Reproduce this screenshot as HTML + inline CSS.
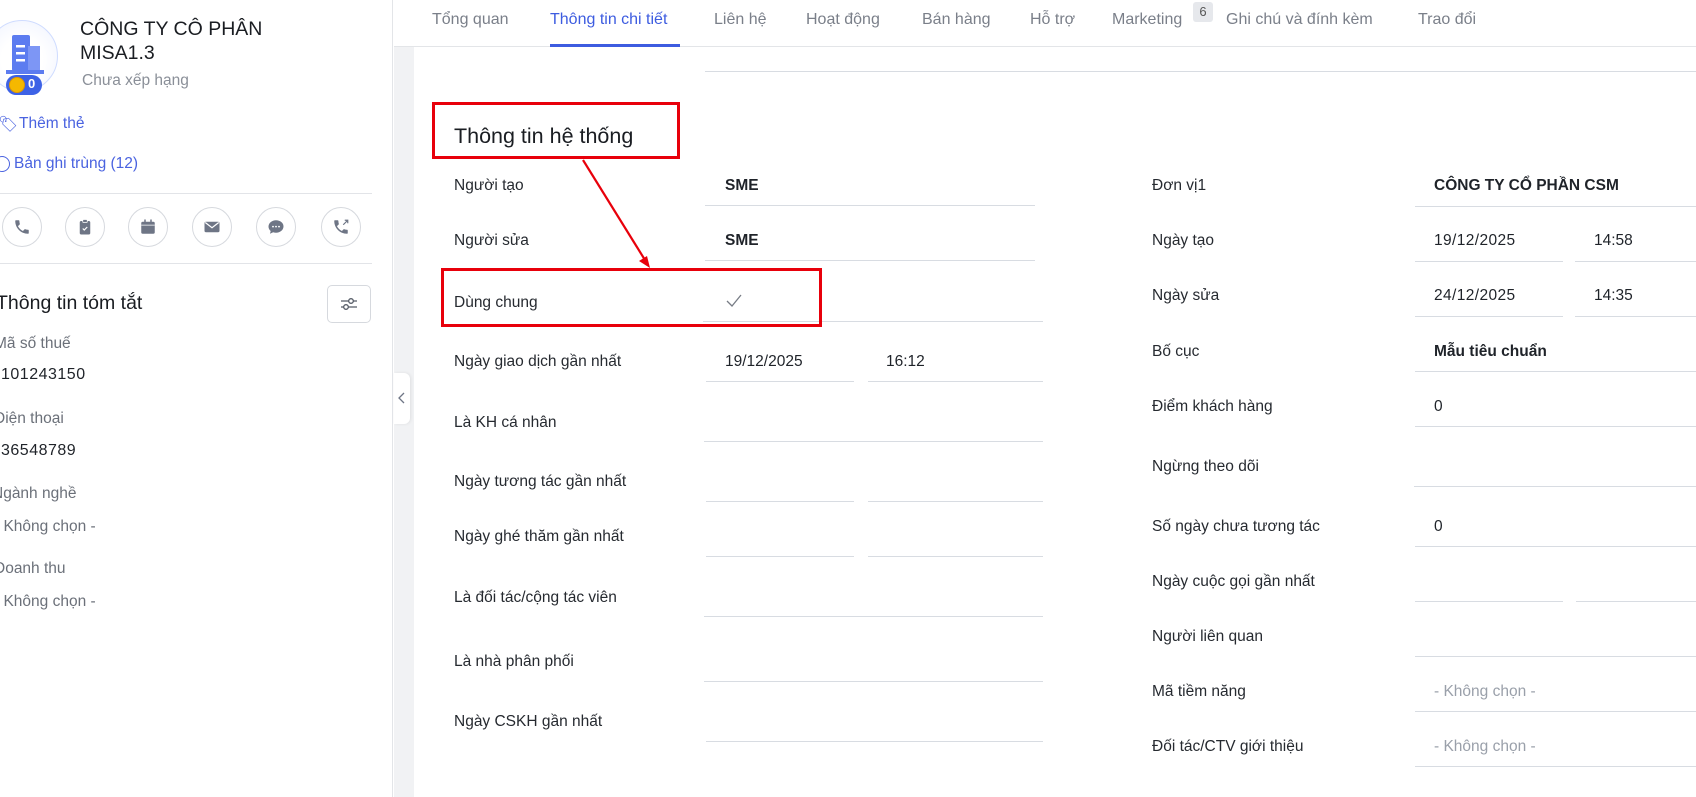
<!DOCTYPE html>
<html><head><meta charset="utf-8"><style>
*{margin:0;padding:0;box-sizing:border-box}
body{width:1696px;height:797px;overflow:hidden;background:#fff;font-family:"Liberation Sans",sans-serif;position:relative;color:#1f2329}
.a{position:absolute;white-space:nowrap}
.lbl{font-size:15.5px;color:#262a30}
.val{font-size:15.5px;font-weight:bold;color:#1f2329}
.ln{position:absolute;height:1px;background:#d8dce2}
.tab{position:absolute;top:11px;font-size:16px;color:#7a7f89}
.gray{color:#9aa0aa}
.ic{position:absolute;width:40px;height:40px;border:1px solid #d6d9de;border-radius:50%;display:flex;align-items:center;justify-content:center}
.side{font-size:15.5px;color:#6b7079}
.sv{font-size:16px;color:#1f2329;letter-spacing:.5px}
</style></head><body>
<!-- left panel -->
<div class="a" style="left:0;top:0;width:393px;height:797px;border-right:1px solid #e3e5e8;background:#fff"></div>
<div class="a" style="left:-14px;top:20px;width:72px;height:72px;border-radius:50%;border:1px solid #cfdcff;background:radial-gradient(circle at 50% 55%,#ffffff 40%,#eef2ff 100%)"></div>
<svg class="a" style="left:4px;top:32px" width="42" height="44" viewBox="0 0 42 44"><rect x="8" y="3" width="18" height="36" rx="2" fill="#5c7cf0"/><rect x="24" y="14" width="12" height="25" fill="#7d96f5"/><rect x="2" y="38" width="38" height="4" fill="#5c7cf0"/><rect x="12" y="13" width="9" height="2.5" fill="#fff"/><rect x="12" y="20" width="9" height="2.5" fill="#fff"/><rect x="12" y="27" width="9" height="2.5" fill="#fff"/></svg>
<div class="a" style="left:6px;top:75px;width:36px;height:20px;border-radius:10px;background:#3d62e6"></div>
<div class="a" style="left:9px;top:77px;width:16px;height:16px;border-radius:50%;background:#f5b800;border:1px solid #e09a00"></div>
<div class="a" style="left:28px;top:76px;font-size:13px;font-weight:bold;color:#fff">0</div>
<div class="a" style="left:80px;top:17px;font-size:19.5px;color:#1a1d22;line-height:24px">CÔNG TY CÔ PHÂN<br>MISA1.3</div>
<div class="a" style="left:82px;top:72px;font-size:15.5px;color:#8a8f98">Chưa xếp hạng</div>
<div class="a" style="left:-2px;top:115px;font-size:15.5px;color:#4a63e0">🏷︎</div>
<div class="a" style="left:19px;top:115px;font-size:15.5px;color:#4a63e0">Thêm thẻ</div>
<div class="a" style="left:-6px;top:156px;width:16px;height:16px;border:1.5px solid #4a63e0;border-radius:50%"></div>
<div class="a" style="left:14px;top:155px;font-size:15.5px;color:#4a63e0">Bản ghi trùng (12)</div>
<div class="ln" style="left:0;top:193px;width:372px;background:#e2e4e8"></div>
<div class="ic" style="left:2px;top:207px"><svg width="18" height="18" viewBox="0 0 24 24"><path d="M6.6 10.8c1.4 2.8 3.8 5.1 6.6 6.6l2.2-2.2c.3-.3.7-.4 1-.2 1.1.4 2.3.6 3.6.6.6 0 1 .4 1 1V20c0 .6-.4 1-1 1C10.6 21 3 13.4 3 4c0-.6.4-1 1-1h3.5c.6 0 1 .4 1 1 0 1.3.2 2.5.6 3.6.1.3 0 .7-.2 1z" fill="#6e7585"/></svg></div>
<div class="ic" style="left:65px;top:207px"><svg width="18" height="18" viewBox="0 0 24 24"><rect x="5" y="4" width="14" height="18" rx="2" fill="#6e7585"/><rect x="9" y="2" width="6" height="4" rx="1" fill="#6e7585" stroke="#fff"/><path d="M9 14l2 2 4-4" stroke="#fff" stroke-width="1.6" fill="none"/></svg></div>
<div class="ic" style="left:128px;top:207px"><svg width="18" height="18" viewBox="0 0 24 24"><rect x="3" y="5" width="18" height="16" rx="2" fill="#6e7585"/><rect x="7" y="2" width="2" height="5" fill="#6e7585"/><rect x="15" y="2" width="2" height="5" fill="#6e7585"/><rect x="3" y="9" width="18" height="1" fill="#fff"/></svg></div>
<div class="ic" style="left:192px;top:207px"><svg width="20" height="18" viewBox="0 0 24 24"><rect x="2" y="5" width="20" height="14" rx="2" fill="#6e7585"/><path d="M3 6l9 7 9-7" stroke="#fff" stroke-width="1.6" fill="none"/></svg></div>
<div class="ic" style="left:256px;top:207px"><svg width="18" height="18" viewBox="0 0 24 24"><path d="M12 3C6.5 3 2 6.8 2 11.5c0 2.3 1.1 4.4 2.9 5.9L4 21l4.2-2c1.2.4 2.5.6 3.8.6 5.5 0 10-3.8 10-8.5S17.5 3 12 3z" fill="#6e7585"/><circle cx="8" cy="11.5" r="1.2" fill="#fff"/><circle cx="12" cy="11.5" r="1.2" fill="#fff"/><circle cx="16" cy="11.5" r="1.2" fill="#fff"/></svg></div>
<div class="ic" style="left:321px;top:207px"><svg width="18" height="18" viewBox="0 0 24 24"><path d="M6.6 10.8c1.4 2.8 3.8 5.1 6.6 6.6l2.2-2.2c.3-.3.7-.4 1-.2 1.1.4 2.3.6 3.6.6.6 0 1 .4 1 1V20c0 .6-.4 1-1 1C10.6 21 3 13.4 3 4c0-.6.4-1 1-1h3.5c.6 0 1 .4 1 1 0 1.3.2 2.5.6 3.6.1.3 0 .7-.2 1z" fill="#6e7585"/><path d="M15 9l6-6M17 3h4v4" stroke="#6e7585" stroke-width="1.6" fill="none"/></svg></div>
<div class="ln" style="left:0;top:263px;width:372px;background:#e2e4e8"></div>
<div class="a" style="left:-4px;top:292px;font-size:19.5px;color:#1a1d22">Thông tin tóm tắt</div>
<div class="a" style="left:327px;top:285px;width:44px;height:38px;border:1px solid #d6d9de;border-radius:5px"></div>
<svg class="a" style="left:339px;top:294px" width="20" height="20" viewBox="0 0 20 20"><path d="M2 7h16M2 13h16" stroke="#555b66" stroke-width="1.3"/><circle cx="12" cy="7" r="2.3" fill="#fff" stroke="#555b66" stroke-width="1.3"/><circle cx="7" cy="13" r="2.3" fill="#fff" stroke="#555b66" stroke-width="1.3"/></svg>
<div class="a side" style="left:-6px;top:335px">Mã số thuế</div>
<div class="a sv" style="left:1px;top:366px">101243150</div>
<div class="a side" style="left:-6px;top:410px">Điện thoại</div>
<div class="a sv" style="left:1px;top:442px">36548789</div>
<div class="a side" style="left:-8px;top:485px">Ngành nghề</div>
<div class="a side gray" style="left:-6px;top:518px">- Không chọn -</div>
<div class="a side" style="left:-6px;top:560px">Doanh thu</div>
<div class="a side gray" style="left:-6px;top:593px">- Không chọn -</div>
<!-- gray strip -->
<div class="a" style="left:394px;top:47px;width:20px;height:750px;background:#f1f2f4"></div>
<div class="a" style="left:394px;top:373px;width:16px;height:51px;background:#fff;border-radius:0 6px 6px 0;box-shadow:1px 0 3px rgba(0,0,0,.08)"></div>
<svg class="a" style="left:397px;top:391px" width="10" height="14" viewBox="0 0 10 14"><path d="M7 2L2 7l5 5" stroke="#6e7585" stroke-width="1.3" fill="none"/></svg>
<!-- tabs -->
<div class="ln" style="left:394px;top:46px;width:1302px;background:#e3e5e8"></div>
<div class="tab" style="left:432px">Tổng quan</div>
<div class="tab" style="left:550px;color:#3d5ce0">Thông tin chi tiết</div>
<div class="a" style="left:550px;top:44px;width:130px;height:3px;background:#3d5ce0"></div>
<div class="tab" style="left:714px">Liên hệ</div>
<div class="tab" style="left:806px">Hoạt động</div>
<div class="tab" style="left:922px">Bán hàng</div>
<div class="tab" style="left:1030px">Hỗ trợ</div>
<div class="tab" style="left:1112px">Marketing</div>
<div class="a" style="left:1193px;top:2px;width:20px;height:20px;background:#e6e8ec;border-radius:3px;font-size:13px;color:#555;text-align:center;line-height:20px">6</div>
<div class="tab" style="left:1226px">Ghi chú và đính kèm</div>
<div class="tab" style="left:1418px">Trao đổi</div>
<div class="ln" style="left:705px;top:71px;width:991px"></div>
<!-- heading -->
<div class="a" style="left:454px;top:124px;font-size:21.5px;color:#1a1d22">Thông tin hệ thống</div>
<!-- left column -->
<div class="a lbl" style="left:454px;top:177px">Người tạo</div><div class="a val" style="left:725px;top:177px">SME</div><div class="ln" style="left:705px;top:205px;width:330px"></div>
<div class="a lbl" style="left:454px;top:232px">Người sửa</div><div class="a val" style="left:725px;top:232px">SME</div><div class="ln" style="left:705px;top:260px;width:330px"></div>
<div class="a lbl" style="left:454px;top:294px">Dùng chung</div>
<svg class="a" style="left:725px;top:293px" width="18" height="16" viewBox="0 0 18 16"><path d="M2 8l5 5 9-11" stroke="#777c85" stroke-width="1.3" fill="none"/></svg>
<div class="ln" style="left:703px;top:321px;width:340px"></div>
<div class="a lbl" style="left:454px;top:353px">Ngày giao dịch gần nhất</div><div class="a val" style="left:725px;top:353px;font-weight:normal">19/12/2025</div><div class="a val" style="left:886px;top:353px;font-weight:normal">16:12</div>
<div class="ln" style="left:706px;top:381px;width:148px"></div><div class="ln" style="left:868px;top:381px;width:175px"></div>
<div class="a lbl" style="left:454px;top:414px">Là KH cá nhân</div><div class="ln" style="left:704px;top:441px;width:339px"></div>
<div class="a lbl" style="left:454px;top:473px">Ngày tương tác gần nhất</div><div class="ln" style="left:706px;top:501px;width:148px"></div><div class="ln" style="left:868px;top:501px;width:175px"></div>
<div class="a lbl" style="left:454px;top:528px">Ngày ghé thăm gần nhất</div><div class="ln" style="left:706px;top:556px;width:148px"></div><div class="ln" style="left:868px;top:556px;width:175px"></div>
<div class="a lbl" style="left:454px;top:589px">Là đối tác/cộng tác viên</div><div class="ln" style="left:704px;top:616px;width:339px"></div>
<div class="a lbl" style="left:454px;top:653px">Là nhà phân phối</div><div class="ln" style="left:704px;top:681px;width:339px"></div>
<div class="a lbl" style="left:454px;top:713px">Ngày CSKH gần nhất</div><div class="ln" style="left:706px;top:741px;width:337px"></div>
<!-- right column -->
<div class="a lbl" style="left:1152px;top:177px">Đơn vị1</div><div class="a val" style="left:1434px;top:177px">CÔNG TY CỔ PHẦN CSM</div><div class="ln" style="left:1415px;top:206px;width:281px"></div>
<div class="a lbl" style="left:1152px;top:232px">Ngày tạo</div><div class="a val" style="left:1434px;top:232px;font-weight:normal;letter-spacing:.4px">19/12/2025</div><div class="a val" style="left:1594px;top:232px;font-weight:normal">14:58</div><div class="ln" style="left:1415px;top:261px;width:148px"></div><div class="ln" style="left:1575px;top:261px;width:121px"></div>
<div class="a lbl" style="left:1152px;top:287px">Ngày sửa</div><div class="a val" style="left:1434px;top:287px;font-weight:normal;letter-spacing:.4px">24/12/2025</div><div class="a val" style="left:1594px;top:287px;font-weight:normal">14:35</div><div class="ln" style="left:1415px;top:316px;width:148px"></div><div class="ln" style="left:1575px;top:316px;width:121px"></div>
<div class="a lbl" style="left:1152px;top:343px">Bố cục</div><div class="a val" style="left:1434px;top:343px">Mẫu tiêu chuẩn</div><div class="ln" style="left:1415px;top:371px;width:281px"></div>
<div class="a lbl" style="left:1152px;top:398px">Điểm khách hàng</div><div class="a val" style="left:1434px;top:398px;font-weight:normal">0</div><div class="ln" style="left:1415px;top:426px;width:281px"></div>
<div class="a lbl" style="left:1152px;top:458px">Ngừng theo dõi</div><div class="ln" style="left:1414px;top:486px;width:282px"></div>
<div class="a lbl" style="left:1152px;top:518px">Số ngày chưa tương tác</div><div class="a val" style="left:1434px;top:518px;font-weight:normal">0</div><div class="ln" style="left:1415px;top:546px;width:281px"></div>
<div class="a lbl" style="left:1152px;top:573px">Ngày cuộc gọi gần nhất</div><div class="ln" style="left:1415px;top:601px;width:148px"></div><div class="ln" style="left:1576px;top:601px;width:120px"></div>
<div class="a lbl" style="left:1152px;top:628px">Người liên quan</div><div class="ln" style="left:1415px;top:656px;width:281px"></div>
<div class="a lbl" style="left:1152px;top:683px">Mã tiềm năng</div><div class="a lbl gray" style="left:1434px;top:683px">- Không chọn -</div><div class="ln" style="left:1415px;top:711px;width:281px"></div>
<div class="a lbl" style="left:1152px;top:738px">Đối tác/CTV giới thiệu</div><div class="a lbl gray" style="left:1434px;top:738px">- Không chọn -</div><div class="ln" style="left:1415px;top:766px;width:281px"></div>
<!-- annotations -->
<div class="a" style="left:432px;top:102px;width:248px;height:57px;border:3px solid #e8000b"></div>
<div class="a" style="left:441px;top:268px;width:381px;height:59px;border:3px solid #e8000b"></div>
<svg class="a" style="left:0;top:0" width="1696" height="797"><line x1="583" y1="160" x2="645" y2="260" stroke="#e8000b" stroke-width="2.2"/><path d="M650 268l-11-7 8-5z" fill="#e8000b"/></svg>
</body></html>
